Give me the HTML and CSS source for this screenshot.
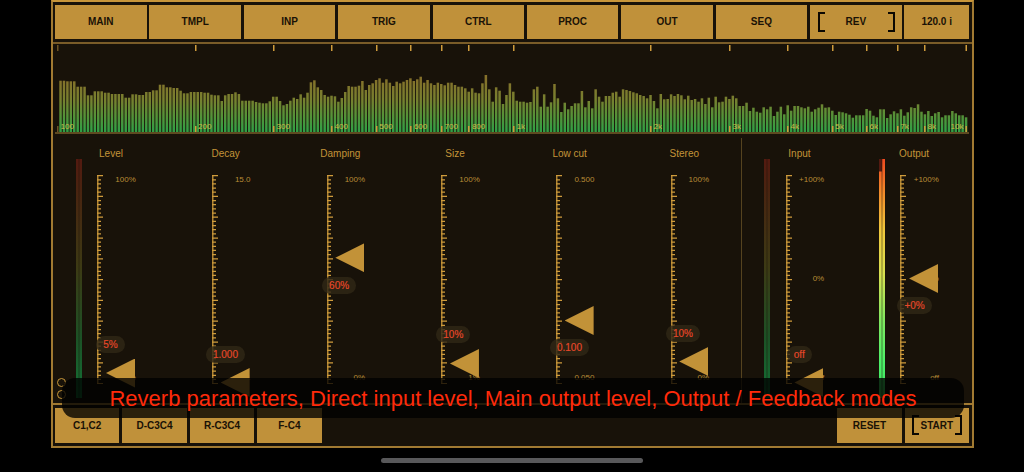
FILE: index.html
```html
<!DOCTYPE html>
<html lang="en">
<head>
<meta charset="utf-8">
<title>Reverb</title>
<link rel="stylesheet" href="styles.css">
</head>
<body>
<main class="frame">
  <nav class="nav">
    <button class="btn">MAIN</button>
    <button class="btn">TMPL</button>
    <button class="btn">INP</button>
    <button class="btn">TRIG</button>
    <button class="btn">CTRL</button>
    <button class="btn">PROC</button>
    <button class="btn">OUT</button>
    <button class="btn">SEQ</button>
    <button class="btn bracket">REV</button>
    <button class="btn">120.0 i</button>
  </nav>

  <section class="spectrum">
    <svg id="bars" class="bars" width="919" height="88" viewBox="53 44 919 88"></svg>
    <span class="mark dim" style="left:4px">100</span>
    <span class="mark" style="left:141.5px">200</span>
    <span class="mark" style="left:220px">300</span>
    <span class="mark" style="left:278px">400</span>
    <span class="mark" style="left:322.7px">500</span>
    <span class="mark" style="left:357.3px">600</span>
    <span class="mark" style="left:388px">700</span>
    <span class="mark" style="left:415.3px">800</span>
    <span class="mark" style="left:460px">1k</span>
    <span class="mark" style="left:597px">2k</span>
    <span class="mark" style="left:676px">3k</span>
    <span class="mark" style="left:734px">4k</span>
    <span class="mark" style="left:778.7px">5k</span>
    <span class="mark" style="left:813px">6k</span>
    <span class="mark" style="left:843.7px">7k</span>
    <span class="mark" style="left:871px">8k</span>
    <span class="mark rev" style="left:914px">10k</span>
  </section>

  <section class="controls">
    <div class="fader">
      <div class="label">Level</div>
      <div class="track">
        <div class="meter"><i class="channel"></i><i class="channel"></i></div>
        <div class="gauge">
          <div class="ruler"></div>
          <div class="scale"><span>100%</span><span>0%</span></div>
          <div class="thumb" style="top:184.1px"></div>
          <div class="pill" style="top:161.5px;left:-1px">5%</div>
        </div>
      </div>
    </div>
    <div class="fader">
      <div class="label">Decay</div>
      <div class="track">
        <div class="meter hidden"></div>
        <div class="gauge">
          <div class="ruler"></div>
          <div class="scale"><span>15.0</span><span>0.1</span></div>
          <div class="thumb" style="top:193.5px"></div>
          <div class="pill" style="top:171.5px;left:-6px">1.000</div>
        </div>
      </div>
    </div>
    <div class="fader">
      <div class="label">Damping</div>
      <div class="track">
        <div class="meter hidden"></div>
        <div class="gauge">
          <div class="ruler"></div>
          <div class="scale"><span>100%</span><span>0%</span></div>
          <div class="thumb" style="top:68.8px"></div>
          <div class="pill" style="top:102.8px;left:-4.5px">60%</div>
        </div>
      </div>
    </div>
    <div class="fader">
      <div class="label">Size</div>
      <div class="track">
        <div class="meter hidden"></div>
        <div class="gauge">
          <div class="ruler"></div>
          <div class="scale"><span>100%</span><span>1%</span></div>
          <div class="thumb" style="top:174.5px"></div>
          <div class="pill" style="top:151.8px;left:-5px">10%</div>
        </div>
      </div>
    </div>
    <div class="fader">
      <div class="label">Low cut</div>
      <div class="track">
        <div class="meter hidden"></div>
        <div class="gauge">
          <div class="ruler"></div>
          <div class="scale"><span>0.500</span><span>0.050</span></div>
          <div class="thumb" style="top:131.5px"></div>
          <div class="pill" style="top:164.8px;left:-6px">0.100</div>
        </div>
      </div>
    </div>
    <div class="fader">
      <div class="label">Stereo</div>
      <div class="track">
        <div class="meter hidden"></div>
        <div class="gauge">
          <div class="ruler"></div>
          <div class="scale"><span>100%</span><span>0%</span></div>
          <div class="thumb" style="top:172.5px"></div>
          <div class="pill" style="top:150.3px;left:-4.7px">10%</div>
        </div>
      </div>
    </div>
    <div class="divider"></div>
    <div class="fader">
      <div class="label">Input</div>
      <div class="track">
        <div class="meter"><i class="channel"></i><i class="channel"></i></div>
        <div class="gauge">
          <div class="ruler"></div>
          <div class="scale"><span>+100%</span><span>0%</span><span>off</span></div>
          <div class="thumb" style="top:193.5px"></div>
          <div class="pill" style="top:171.8px;left:1px">off</div>
        </div>
      </div>
    </div>
    <div class="fader">
      <div class="label">Output</div>
      <div class="track">
        <div class="meter"><i class="channel live left"></i><i class="channel live"></i></div>
        <div class="gauge">
          <div class="ruler"></div>
          <div class="scale"><span>+100%</span><span>0%</span><span>off</span></div>
          <div class="thumb" style="top:89.5px"></div>
          <div class="pill" style="top:122.8px;left:-3px">+0%</div>
        </div>
      </div>
    </div>
  </section>

  <footer class="footer">
    <div class="group">
      <button class="btn small">C1,C2</button>
      <button class="btn small">D-C3C4</button>
      <button class="btn small">R-C3C4</button>
      <button class="btn small">F-C4</button>
    </div>
    <div class="group">
      <button class="btn small">RESET</button>
      <button class="btn small bracket">START</button>
    </div>
  </footer>

  <div class="dots"><i class="dot"></i><i class="dot"></i></div>
  <div class="toast">Reverb parameters, Direct input level, Main output level, Output / Feedback modes</div>
</main>
<div class="home"></div>
<script src="panel.js"></script>
</body>
</html>
```
FILE: styles.css
```css
*, *::before, *::after { box-sizing: border-box; }
html, body { margin: 0; height: 100%; background: #000; overflow: hidden; }
body { display: flex; flex-direction: column; font-family: "Liberation Sans", Arial, sans-serif; }

.frame {
  position: relative;
  width: 923px;
  height: 448px;
  margin-left: 51px;
  flex: none;
  display: flex;
  flex-direction: column;
  background: #181209;
  border: 2px solid #a17a32;
  border-top-color: #c8963a;
}

.btn {
  position: relative;
  display: flex;
  align-items: center;
  justify-content: center;
  margin: 0;
  padding: 0;
  border: 0;
  border-radius: 0;
  background: #c0913a;
  color: #1a1206;
  font: bold 10px "Liberation Sans", Arial, sans-serif;
}
.bracket::before, .bracket::after {
  content: "";
  position: absolute;
  top: 7.5px;
  width: 7px;
  height: 20px;
  border: 2px solid #0c0802;
}
.bracket::before { left: 7.5px; border-right: 0; }
.bracket::after { right: 7px; border-left: 0; }

.nav {
  display: grid;
  grid-template-columns: repeat(9, 1fr) 64.6px;
  gap: 2.85px;
  height: 40px;
  padding: 2.7px 3px 0 2px;
  flex: none;
}
.nav .btn { height: 34.3px; }

.spectrum {
  position: relative;
  flex: none;
  height: 91.5px;
  border-top: 2px solid #7a5c28;
}
.bars { position: absolute; left: 0; top: 0; display: block; }
.spectrum::after {
  content: "";
  position: absolute;
  left: 2px;
  right: 3px;
  top: 87.5px;
  height: 2px;
  background: #5e4a20;
}
.mark {
  position: absolute;
  top: 1px;
  height: 87px;
  padding: 0 0 0 3.6px;
  display: flex;
  align-items: flex-end;
  font-size: 8px;
  line-height: 11px;
  color: #cdb848;
  background:
    linear-gradient(#cf9c3c, #cf9c3c) left top / 1.5px 6px no-repeat,
    linear-gradient(#cf9c3c, #cf9c3c) left bottom / 1.5px 6px no-repeat;
}
.mark.dim { background-image: linear-gradient(#6b5224, #6b5224), linear-gradient(#6b5224, #6b5224); }
.mark.rev {
  padding: 0 3.6px 0 0;
  transform: translateX(-100%);
  background-position: right top, right bottom;
}

.controls {
  flex: 1;
  display: flex;
  padding: 4.5px 0 0 4px;
  min-height: 0;
}
.fader { flex: none; width: 114.67px; }
.label {
  width: 108px;
  margin-top: 9.5px;
  height: 12px;
  line-height: 12px;
  font-size: 10px;
  text-align: center;
  color: #c39438;
}
.track { display: flex; margin-top: -0.7px; }
.meter {
  flex: none;
  display: flex;
  width: 6px;
  height: 238.7px;
  margin-left: 19px;
  -webkit-mask-image: linear-gradient(to right, #000 2px, rgba(0,0,0,.5) 3px, #000 4px);
  mask-image: linear-gradient(to right, #000 2px, rgba(0,0,0,.5) 3px, #000 4px);
}
.meter.hidden { visibility: hidden; }
.channel {
  flex: 1;
  background: linear-gradient(#541a10 0, #4a2310 12%, #3d3a14 45%, #1c5226 75%, #137236 100%);
}
.channel.live {
  background: linear-gradient(#ef4a20 0, #f28a2a 14%, #f0c83c 30%, #d8e050 48%, #7ee860 68%, #4cf068 85%, #3ee060 100%);
}
.channel.live.left {
  background:
    linear-gradient(#541a10, #541a10) top / 100% 12.5px no-repeat,
    linear-gradient(#ef4a20 0, #f28a2a 14%, #f0c83c 30%, #d8e050 48%, #7ee860 68%, #4cf068 85%, #3ee060 100%);
}
.gauge {
  position: relative;
  display: flex;
  height: 208px;
  margin-top: 15.7px;
  margin-left: 15.3px;
}
.ruler { flex: none; width: 6px; height: 209px; }
.ruler svg { display: block; }
.scale {
  flex: none;
  width: 32.5px;
  height: 208px;
  display: flex;
  flex-direction: column;
  justify-content: space-between;
  align-items: flex-end;
  font-size: 8px;
  line-height: 10px;
  color: #b88c36;
}
.thumb {
  position: absolute;
  left: 8.7px;
  width: 29px;
  height: 29px;
  background: #c29238;
  clip-path: polygon(0 50%, 100% 0, 100% 100%);
}
.pill {
  position: absolute;
  height: 17px;
  padding: 0 7px;
  border-radius: 8.5px;
  background: rgba(48, 39, 22, 0.82);
  color: #e8482a;
  font-size: 10px;
  line-height: 17px;
  white-space: nowrap;
  -webkit-text-stroke: 0.15px #e8482a;
}
.divider {
  flex: none;
  width: 1px;
  margin: 0 3.2px 0 -3.7px;
  background: #55431f;
}

.footer {
  flex: none;
  display: flex;
  justify-content: space-between;
  height: 43px;
  padding: 2.5px 3px 0 2px;
  border-top: 2px solid #a17a32;
}
.group { display: flex; gap: 3px; }
.small { width: 64.4px; height: 35px; }

.dots {
  position: absolute;
  left: 3.5px;
  top: 376px;
  display: flex;
  flex-direction: column;
  gap: 2.5px;
}
.dot {
  display: block;
  width: 9px;
  height: 9px;
  border: 1.3px solid #c8983a;
  border-radius: 50%;
}

.toast {
  position: absolute;
  left: 9px;
  top: 376.3px;
  width: 902px;
  height: 40px;
  padding-top: 1px;
  display: flex;
  align-items: center;
  justify-content: center;
  border-radius: 13px;
  background: rgba(0, 0, 0, 0.78);
  color: #ff2a0a;
  font-size: 22px;
  white-space: nowrap;
}

.home {
  flex: none;
  align-self: center;
  width: 262px;
  height: 5px;
  margin-top: 10px;
  border-radius: 3px;
  background: #58585a;
}
```
FILE: panel.js
```js
var first = [242,242,244,244,244,260,260,260,286,286,274,274,274,278,278,282,282,282,282,293,293,283,283,285,285,276,276,271,271,254,254,262,262,264,264,272,280,280,276,276,276,276,278,278,284,286,286,303,286,282,282,277,282,302,302,302,302,306,308,310,310,304,290,290,303,316,312,302,293,297,283,293,278,247,241,262,270,285,290,287,289,305,294,276,258,260,260,257,243,270,255];
var second = [40,30,25,38,28,38,48,35,40,35,30,25,33,28,20,38,30,40,45,38,42,46,38,38,45,50,50,55,65,55,68,70,40,15,58,95,52,62,102,75,40,65,92,95,95];
var third = [98,96,58,50,110,73,110,97,42,85,126,98,118,108,100,100,63,112,93,115,58,80,95,78,78,68,65,80,58,60,63,67,70,75,78,85,75,93,115,72,88,87,73,78,72,76,88];
var fourth = [287,300,297,305,295,312,293,322,290,307,305,290,297,287,295,318,318,308,333,323,335,338,322,328,320,348,335,320,343,316,332,318,318,322,325,320,335,328,323,313,323,322,332,345,335,337,340,344,353,346,346,346,327,332,347,352,328,328,354,343,334,340,328,347,337,322,324,313,335,343,333,348,340,336,352,346,346,333,340,346,346,352];

var tops = first.map(function (v) { return v / 3; })
  .concat(second.concat(third).map(function (v) { return 70 + v / 3; }))
  .concat(fourth.map(function (v) { return v / 3; }));

var NS = "http://www.w3.org/2000/svg";
var svg = document.getElementById("bars");
var defs = document.createElementNS(NS, "defs");
var grad = document.createElementNS(NS, "linearGradient");
grad.setAttribute("id", "barfill");
grad.setAttribute("gradientUnits", "userSpaceOnUse");
grad.setAttribute("x1", "0"); grad.setAttribute("y1", "78");
grad.setAttribute("x2", "0"); grad.setAttribute("y2", "132");
[["0", "#85702a"], ["0.4", "#77802f"], ["0.7", "#559238"], ["1", "#2fa046"]].forEach(function (s) {
  var stop = document.createElementNS(NS, "stop");
  stop.setAttribute("offset", s[0]);
  stop.setAttribute("stop-color", s[1]);
  grad.appendChild(stop);
});
defs.appendChild(grad);
svg.appendChild(defs);

tops.forEach(function (top, i) {
  var r = document.createElementNS(NS, "rect");
  r.setAttribute("x", (59.3 + i * 3.43).toFixed(2));
  r.setAttribute("y", top.toFixed(1));
  r.setAttribute("width", "2.5");
  r.setAttribute("height", (132 - top).toFixed(1));
  r.setAttribute("fill", "url(#barfill)");
  svg.appendChild(r);
});

/* Fader rulers: 50 divisions, a longer tick every fifth. */
var d = "M.8 0V208.6";
for (var t = 0; t <= 50; t++) {
  var y = 0.6 + t * 4.16;
  d += "M0 " + y.toFixed(2) + "H" + (t % 5 === 0 ? 6 : 4);
}
Array.prototype.forEach.call(document.querySelectorAll(".ruler"), function (el) {
  el.innerHTML = '<svg width="6" height="209" viewBox="0 0 6 209"><path d="' + d +
    '" fill="none" stroke="#cf9c3c" stroke-width="1.25"/></svg>';
});
```
